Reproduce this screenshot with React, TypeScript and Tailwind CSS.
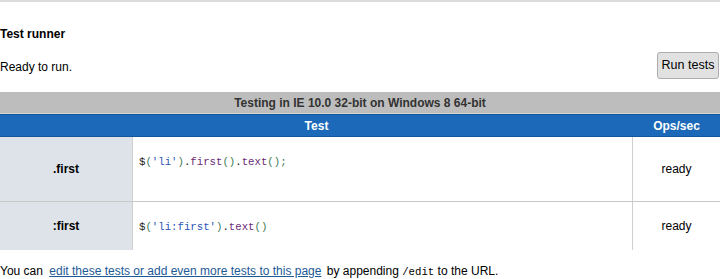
import React from 'react';

const sans = { fontFamily: '"Liberation Sans", Arial, sans-serif' };

function Code({ parts }: { parts: [string, string][] }) {
  return (
    <code className="font-['Liberation_Mono',monospace] text-[10.7px] leading-[13px] whitespace-pre">
      {parts.map(([t, c], i) => (
        <span key={i} className={c}>
          {t}
        </span>
      ))}
    </code>
  );
}

const pun = 'text-[#3f7a55]';
const str = 'text-[#2a55b8]';
const id = 'text-[#6a2a78]';
const pln = 'text-[#222]';

const rows = [
  {
    name: '.first',
    h: 'h-[65px]',
    code: [
      ['$', pln],
      ['(', pun],
      ["'li'", str],
      [')', pun],
      ['.', pln],
      ['first', id],
      ['()', pun],
      ['.', pln],
      ['text', id],
      ['();', pun],
    ] as [string, string][],
  },
  {
    name: ':first',
    h: 'h-[48px]',
    code: [
      ['$', pln],
      ['(', pun],
      ["'li:first'", str],
      [')', pun],
      ['.', pln],
      ['text', id],
      ['()', pun],
    ] as [string, string][],
  },
];

export default function App() {
  return (
    <div className="w-[720px] h-[279px] bg-white text-[12px] text-black overflow-hidden" style={sans}>
      <div className="border-t-2 border-[#dcdcdc]" />

      {/* Header */}
      <h2 className="mt-[25px] font-bold leading-[15px] text-[12px]">Test runner</h2>

      <div className="flex items-center justify-between mt-[10px] pr-[1px]">
        <p className="leading-[15px] mt-[3px]">Ready to run.</p>
        <button className="w-[62px] h-[27px] bg-[#e1e1e1] border border-[#adadad] rounded-[3px] text-[12.5px] text-black">
          Run tests
        </button>
      </div>

      {/* Results table */}
      <div className="mt-[13px]">
        <div className="h-[22px] bg-[#bdbdbd] border-b border-[#d6d6d6] flex items-center justify-center font-bold text-[#333]">
          Testing in IE 10.0 32-bit on Windows 8 64-bit
        </div>
        <div className="h-[23px] bg-[#1b69b8] border-y border-[#14569c] flex text-white font-bold">
          <div className="flex-1 flex items-center justify-center">Test</div>
          <div className="w-[87px] flex items-center justify-center">Ops/sec</div>
        </div>

        {rows.map((r, i) => (
          <div key={r.name} className={`flex ${r.h} ${i === 0 ? 'border-b border-[#c8c8c8]' : ''}`}>
            <div className="w-[133px] bg-[#dde3e9] border-r border-[#cfcfcf] flex items-center justify-center font-bold">
              {r.name}
            </div>
            <div className="flex-1 pl-[6px] pt-[15px]">
              <Code parts={r.code} />
            </div>
            <div className="w-[88px] border-l border-[#cfcfcf] flex items-center justify-center">ready</div>
          </div>
        ))}
      </div>

      {/* Footer */}
      <p className="mt-[14px] leading-[15px] whitespace-pre">
        You can{' '}
        <a href="#" className="ml-[3px] mr-[2px] text-[#1c5a96] underline">
          edit these tests or add even more tests to this page
        </a>{' '}
        by appending{' '}
        <code className="font-['Liberation_Mono',monospace] text-[10.7px]">/edit</code> to the URL.
      </p>
    </div>
  );
}
